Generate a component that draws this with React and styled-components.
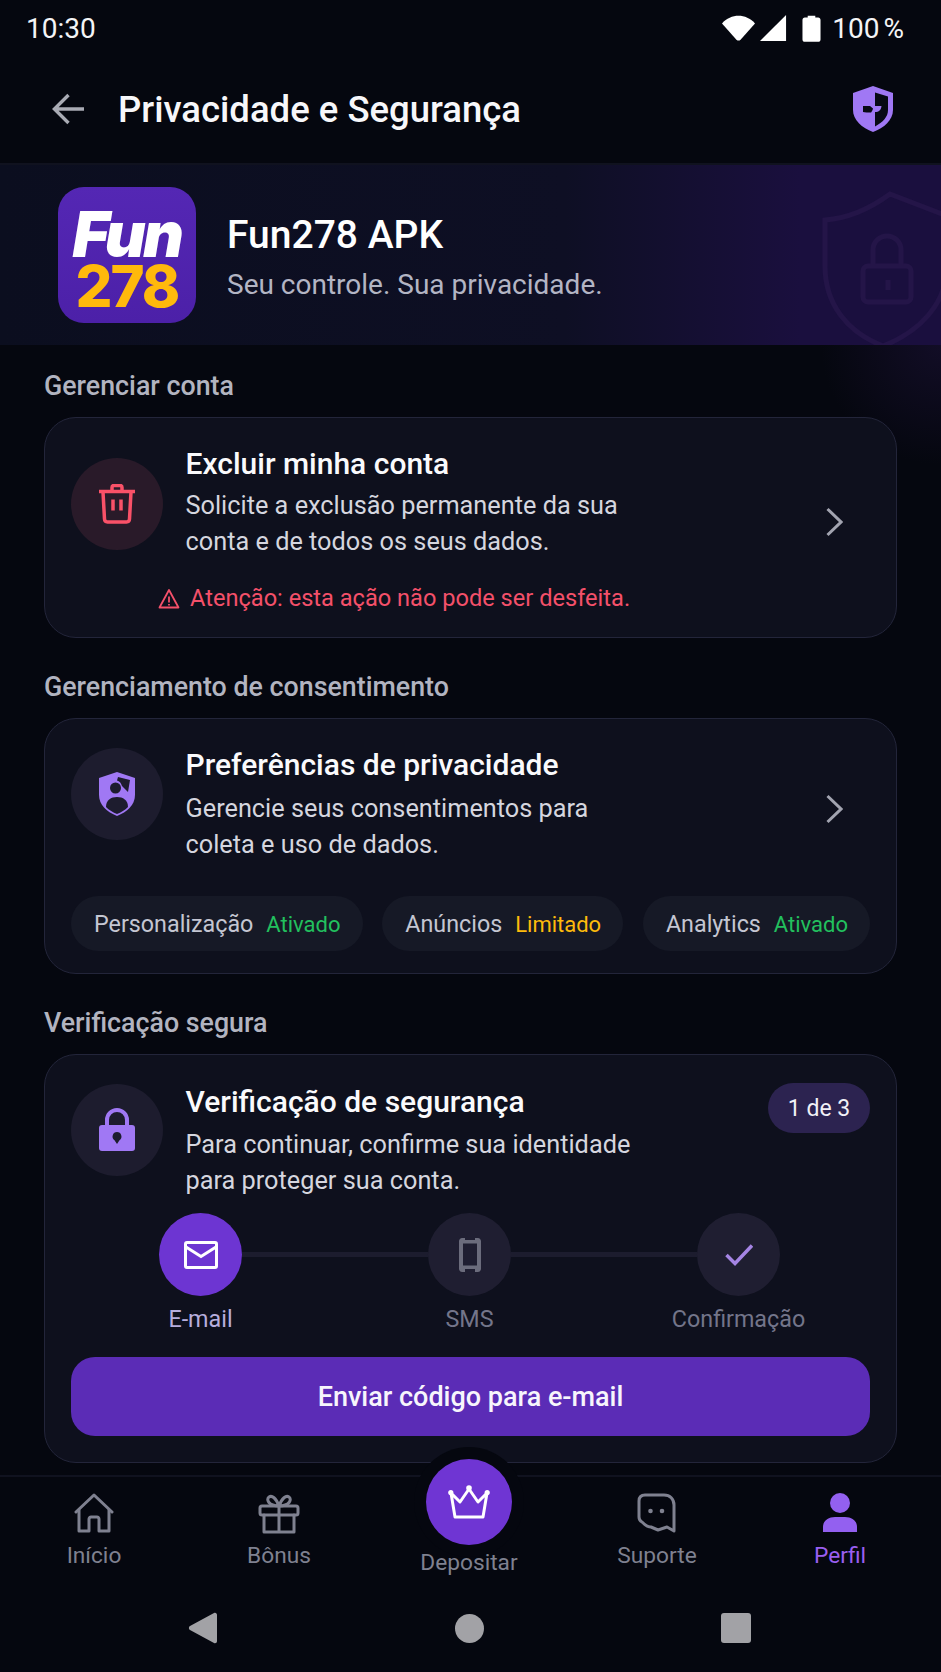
import React from 'react'
import styled, { createGlobalStyle } from 'styled-components'

const Global = createGlobalStyle`
  html, body { margin: 0; padding: 0; background: #05070f; }
  * { box-sizing: border-box; }
`

const Screen = styled.div`
  width: 941px;
  height: 1672px;
  display: flex;
  flex-direction: column;
  overflow: hidden;
  background: #05070f;
  font-family: Roboto, "Liberation Sans", sans-serif;
  color: #fff;
`

const StatusBar = styled.div`
  height: 55px;
  flex: none;
  display: flex;
  align-items: center;
  justify-content: space-between;
  padding: 1px 37px 0 26px;
  font-size: 28px;
  color: #f4f4f6;
`

const StatusIcons = styled.div`
  display: flex;
  align-items: center;
  gap: 5px;
`

const Percent = styled.span`
  margin-left: 6px;
  word-spacing: -3px;
`

const Header = styled.header`
  height: 110px;
  flex: none;
  display: flex;
  align-items: center;
  padding: 0 47px 0 52px;
  border-bottom: 2px solid #10121f;
`

const HeaderTitle = styled.h1`
  flex: 1;
  margin: 0 0 0 33px;
  font-size: 36.500px;
  font-weight: 500;
  color: #f7f7fa;
`

const Hero = styled.section`
  position: relative;
  height: 180px;
  flex: none;
  display: flex;
  align-items: center;
  gap: 31px;
  padding: 0 0 0 58px;
  overflow: hidden;
  background: linear-gradient(90deg, #0b0e1f 0%, #0e0f24 60%, #1a0f3e 85%, #1a0f3e 100%);
`

const Watermark = styled.svg`
  position: absolute;
  top: 25px;
  right: -12px;
`

const Logo = styled.div`
  width: 138px;
  height: 136px;
  flex: none;
  display: flex;
  flex-direction: column;
  align-items: center;
  justify-content: center;
  padding-top: 10px;
  border-radius: 26px;
  background: linear-gradient(180deg, #5427b4 0%, #4c20a8 100%);
  font-family: Inter, "Liberation Sans", sans-serif;
`

const LogoFun = styled.span`
  font-size: 63px;
  line-height: 52px;
  font-weight: 900;
  font-style: italic;
  letter-spacing: -2.500px;
  color: #fff;
`

const LogoNum = styled.span`
  font-size: 58px;
  line-height: 52px;
  font-weight: 800;
  letter-spacing: -2px;
  color: #ffb90c;
`

const HeroText = styled.div`
  margin-top: 4px;
`

const HeroTitle = styled.div`
  font-size: 39px;
  line-height: 44px;
  font-weight: 500;
  color: #fff;
`

const HeroSub = styled.div`
  margin-top: 11px;
  font-size: 28px;
  line-height: 34px;
  color: #b3b5c4;
`

const Main = styled.main`
  flex: 1;
  min-height: 0;
  padding: 26px 44px 0 44px;
  background: radial-gradient(circle at 100% 0%, #120d26 0%, rgba(18, 13, 38, 0) 120px), #05070f;
`

const SectionLabel = styled.h2`
  margin: 0 0 16px;
  font-size: 26.800px;
  line-height: 30px;
  font-weight: 500;
  color: #b2b4c0;
`

const Card = styled.section`
  position: relative;
  margin-bottom: 34px;
  padding: 28px 26px 22px;
  border: 1px solid #23253a;
  border-radius: 32px;
  background: #0e101d;
`

const Row = styled.div`
  display: flex;
  align-items: flex-start;
  gap: 22.500px;
`

const IconCircle = styled.div`
  width: 92px;
  height: 92px;
  flex: none;
  margin-top: ${p => p.$offset}px;
  display: flex;
  align-items: center;
  justify-content: center;
  border-radius: 50%;
  background: ${p => (p.$danger ? '#291a29' : '#1d1c2e')};
`

const Body = styled.div`
  flex: 1;
  margin-top: ${p => p.$nudge || 0}px;
`

const CardTitle = styled.h3`
  margin: 0 0 ${p => p.$gap || 6}px;
  font-size: 30px;
  line-height: 36px;
  font-weight: 500;
  color: #fafafc;
`

const CardText = styled.p`
  margin: 0;
  font-size: 25.300px;
  line-height: 36px;
  color: #d5d6df;
`

const Chevron = styled.svg`
  flex: none;
  margin: ${p => p.$top}px 27px 0 0;
`

const Warning = styled.div`
  display: flex;
  align-items: center;
  gap: 10px;
  margin: 22px 0 0 87px;
  font-size: 23.600px;
  line-height: 33px;
  color: #f4506a;
`

const Chips = styled.div`
  display: flex;
  justify-content: space-between;
  margin-top: 33px;
`

const Chip = styled.div`
  height: 55px;
  display: flex;
  align-items: center;
  gap: 13px;
  padding: 1px 22px 0 23px;
  border-radius: 28px;
  background: #161926;
  font-size: 23.300px;
  color: #c4c6d2;
`

const ChipState = styled.span`
  font-size: 22px;
  color: ${p => (p.$warn ? '#fdbb0c' : '#22c05e')};
`

const StepBadge = styled.span`
  position: absolute;
  top: 28px;
  right: 26px;
  width: 102px;
  height: 50px;
  display: flex;
  align-items: center;
  justify-content: center;
  border-radius: 25px;
  background: #2c2350;
  font-size: 23px;
  color: #f1f0f6;
`

const Stepper = styled.div`
  display: flex;
  margin: 14px 90px 0 88px;
`

const Step = styled.div`
  width: 83px;
  flex: none;
  display: flex;
  flex-direction: column;
  align-items: center;
`

const StepDot = styled.div`
  width: 83px;
  height: 83px;
  display: flex;
  align-items: center;
  justify-content: center;
  border-radius: 50%;
  background: ${p => (p.$active ? '#6d35d2' : '#1f1e31')};
`

const StepLabel = styled.span`
  margin-top: 7px;
  font-size: 23.300px;
  line-height: 32px;
  white-space: nowrap;
  color: ${p => (p.$active ? '#b7aedd' : '#73758a')};
`

const StepLine = styled.div`
  flex: 1;
  height: 5px;
  margin-top: 39px;
  background: #1c1c2e;
`

const SubmitButton = styled.button`
  display: block;
  width: 100%;
  height: 79px;
  margin: 22px 0 4px;
  border: none;
  border-radius: 24px;
  background: #5b2cb6;
  font-family: inherit;
  font-size: 27px;
  font-weight: 500;
  color: #f7f5fc;
`

const BottomNav = styled.nav`
  position: relative;
  z-index: 2;
  height: 115px;
  flex: none;
  display: grid;
  grid-template-columns: 188px 182px 198px 178px 188px;
  border-top: 2px solid #10121f;
  background: #05070f;
`

const NavItem = styled.div`
  display: flex;
  flex-direction: column;
  align-items: center;
  padding-top: 16px;
  font-size: 22.700px;
  line-height: 32px;
  color: ${p => (p.$active ? '#9a5ff0' : '#7f8190')};
`

const NavIcon = styled.svg`
  margin-bottom: 5px;
`

const DepositItem = styled(NavItem)`
  position: relative;
  padding-top: 0;
  margin-top: -18px;
  &::before {
    content: '';
    position: absolute;
    top: -12px;
    width: 110px;
    height: 110px;
    border-radius: 50%;
    background: #05070f;
  }
`

const DepositCircle = styled.div`
  position: relative;
  width: 86px;
  height: 86px;
  display: flex;
  align-items: center;
  justify-content: center;
  margin-bottom: 2px;
  border-radius: 50%;
  background: #6f35d3;
`

const DepositLabel = styled.span`
  position: relative;
`

const SystemBar = styled.div`
  height: 82px;
  flex: none;
  display: grid;
  grid-template-columns: 406px 133px 212px;
  justify-content: start;
  align-items: center;
  padding-bottom: 6px;
  background: #05070f;
`

const SysSlot = styled.div`
  display: flex;
  justify-content: flex-end;
`

const SysBack = styled.svg`
  margin-right: 188px;
`

const SysCircle = styled.div`
  width: 29px;
  height: 29px;
  margin-right: 55px;
  border-radius: 50%;
  background: #a2a2a6;
`

const SysSquare = styled.div`
  width: 30px;
  height: 30px;
  border-radius: 3px;
  background: #a2a2a6;
`

const BatteryIcon = styled.svg`
  margin-left: 10px;
`

const ShieldPerson = () => (
  <svg width="40" height="46" viewBox="0 0 40 46">
    <path d="M20 1 38 7v17c0 10-8 17-18 21C10 41 2 34 2 24V7z" fill="#a078f4" />
    <path d="M21 6 33 9l-2 12-6-6c-1-3-2.500-5-5-5.500z" fill="#1d1c2e" />
    <circle cx="18.500" cy="17" r="5.500" fill="#1d1c2e" />
    <path d="M9 36c0-7 5-10 11-10s11 3 11 10c-3 3-7 5.500-11 7-4-1.500-8-4-11-7z" fill="#1d1c2e" />
  </svg>
)

const Icons = {
  wifi: (
    <svg width="33" height="28" viewBox="0 0 36 28"><path d="M0 9C10-2 26-2 36 9L20 27c-1 1-3 1-4 0z" fill="#fff" /></svg>
  ),
  signal: (
    <svg width="27" height="28" viewBox="0 0 29 28"><path d="M28 0v28H0z" fill="#fff" /></svg>
  ),
  battery: (
    <BatteryIcon width="19" height="29" viewBox="0 0 20 29"><path d="M6 3V1h8v2h3c1.500 0 2.500 1 2.500 2.500V26c0 1.500-1 2.500-2.500 2.500H3C1.500 28.500.5 27.500.5 26V5.500C.5 4 1.500 3 3 3z" fill="#fff" /></BatteryIcon>
  ),
  back: (
    <svg width="33" height="32" viewBox="0 0 34 32" fill="none" stroke="#a9abb4" strokeWidth="3.500"><path d="M33 16H3M17 1.500 2.500 16 17 30.500" /></svg>
  ),
  headerShield: (
    <svg width="42" height="46" viewBox="0 0 42 46">
      <path d="M21 0 41 7v17c0 10-9 18-20 22C10 42 1 34 1 24V7z" fill="#a078f4" />
      <path d="M23 6.500 36 10.500V24c0 7-5 12-13 16.500V26c4 0 6-2 6.500-6H23z" fill="#080a14" />
      <path d="M11 20h7l3 2.500c-.5 2-1.500 3.500-2 4-3 0-6 0-8-.5z" fill="#080a14" />
    </svg>
  ),
  trash: (
    <svg width="38" height="40" viewBox="0 0 38 40" fill="none" stroke="#fa5168" strokeWidth="3.500" strokeLinejoin="round">
      <path d="M1 7.500h36" />
      <path d="M14 6V3.500C14 2 15 1.500 16 1.500h6c1 0 2 .5 2 2V6" />
      <path d="M5 8l1.500 27c.1 2 1 3 3 3h19c2 0 2.900-1 3-3L33 8" />
      <path d="M15 15.500v11M23 15.500v11" />
    </svg>
  ),
  alert: (
    <svg width="22" height="22" viewBox="0 0 22 22" fill="none" stroke="#f4506a" strokeWidth="1.800" strokeLinejoin="round">
      <path d="M11 2 20.500 19.500h-19z" />
      <path d="M11 8.500v6M11 16v1.500" />
    </svg>
  ),
  chevron: (top) => (
    <Chevron $top={top} width="18" height="30" viewBox="0 0 18 30" fill="none" stroke="#a2a4b0" strokeWidth="3"><path d="M2.500 2 16 15 2.500 28" /></Chevron>
  ),
  lock: (
    <svg width="38" height="44" viewBox="0 0 38 44">
      <path d="M9 20V12a10 10 0 0 1 20 0v8" fill="none" stroke="#a078f4" strokeWidth="4" />
      <rect x="1" y="17" width="36" height="26" rx="3" fill="#a078f4" />
      <path d="M19 24a4.500 4.500 0 0 1 2.500 8.200L19 36l-2.500-3.800A4.500 4.500 0 0 1 19 24z" fill="#1d1c2e" />
    </svg>
  ),
  mail: (
    <svg width="34" height="28" viewBox="0 0 34 28" fill="none" stroke="#fff" strokeWidth="3">
      <rect x="1.500" y="1.500" width="31" height="25" rx="1.500" />
      <path d="M2 6l15 9.500L32 6" />
    </svg>
  ),
  phone: (
    <svg width="22" height="34" viewBox="0 0 22 34">
      <path d="M3 0h3v2h10V0h3c1.500 0 3 1.500 3 3v28c0 1.500-1.500 3-3 3h-3v-3H6v3H3c-1.500 0-3-1.500-3-3V3C0 1.500 1.500 0 3 0z" fill="#6b6c7c" />
      <rect x="4" y="5.500" width="14" height="22" fill="#1f1e31" />
    </svg>
  ),
  check: (
    <svg width="28" height="22" viewBox="0 0 28 22" fill="none" stroke="#a585e4" strokeWidth="3.500"><path d="M1.500 11 10 19.500 27 1.500" /></svg>
  ),
  crown: (
    <svg width="42" height="36" viewBox="0 0 42 36" fill="none" stroke="#fff" strokeWidth="3" strokeLinejoin="round">
      <path d="M3 9l9 9 9-13 9 13 9-9-4 24H7z" />
      <circle cx="21" cy="4" r="2.800" fill="#fff" stroke="none" />
      <circle cx="2.800" cy="8.500" r="2.600" fill="#fff" stroke="none" />
      <circle cx="39.200" cy="8.500" r="2.600" fill="#fff" stroke="none" />
    </svg>
  ),
}

const navStroke = { fill: 'none', stroke: '#7f8190', strokeWidth: 3, strokeLinejoin: 'round', strokeLinecap: 'round' }

const Tab = ({ label, active, children }) => (
  <NavItem $active={active}>
    <NavIcon width="44" height="42" viewBox="0 0 44 42">{children}</NavIcon>
    {label}
  </NavItem>
)

const App = () => (
  <>
    <Global />
    <Screen>
      <StatusBar>
        <span>10:30</span>
        <StatusIcons>
          {Icons.wifi}
          {Icons.signal}
          {Icons.battery}
          <Percent>100 %</Percent>
        </StatusIcons>
      </StatusBar>

      <Header>
        {Icons.back}
        <HeaderTitle>Privacidade e Segurança</HeaderTitle>
        {Icons.headerShield}
      </Header>

      <Hero>
        <Watermark width="140" height="160" viewBox="0 0 140 160" fill="none" stroke="#241548" strokeWidth="5">
          <path d="M77 4 134 26v50c0 38-28 66-64 80C34 142 12 114 12 76V30c26-2 46-12 65-26z" />
          <rect x="50" y="76" width="48" height="36" rx="5" />
          <path d="M60 76V60a14 14 0 0 1 28 0v16" />
          <path d="M75 90v10" />
        </Watermark>
        <Logo>
          <LogoFun>Fun</LogoFun>
          <LogoNum>278</LogoNum>
        </Logo>
        <HeroText>
          <HeroTitle>Fun278 APK</HeroTitle>
          <HeroSub>Seu controle. Sua privacidade.</HeroSub>
        </HeroText>
      </Hero>

      <Main>
        <SectionLabel>Gerenciar conta</SectionLabel>
        <Card>
          <Row>
            <IconCircle $danger $offset={12}>{Icons.trash}</IconCircle>
            <Body>
              <CardTitle>Excluir minha conta</CardTitle>
              <CardText>Solicite a exclusão permanente da sua<br />conta e de todos os seus dados.</CardText>
            </Body>
            {Icons.chevron(61)}
          </Row>
          <Warning>{Icons.alert}Atenção: esta ação não pode ser desfeita.</Warning>
        </Card>

        <SectionLabel>Gerenciamento de consentimento</SectionLabel>
        <Card>
          <Row>
            <IconCircle $offset={1}><ShieldPerson /></IconCircle>
            <Body>
              <CardTitle $gap={8}>Preferências de privacidade</CardTitle>
              <CardText>Gerencie seus consentimentos para<br />coleta e uso de dados.</CardText>
            </Body>
            {Icons.chevron(47)}
          </Row>
          <Chips>
            <Chip>Personalização <ChipState>Ativado</ChipState></Chip>
            <Chip>Anúncios <ChipState $warn>Limitado</ChipState></Chip>
            <Chip>Analytics <ChipState>Ativado</ChipState></Chip>
          </Chips>
        </Card>

        <SectionLabel>Verificação segura</SectionLabel>
        <Card>
          <StepBadge>1 de 3</StepBadge>
          <Row>
            <IconCircle $offset={1}>{Icons.lock}</IconCircle>
            <Body $nudge={1}>
              <CardTitle $gap={7}>Verificação de segurança</CardTitle>
              <CardText>Para continuar, confirme sua identidade<br />para proteger sua conta.</CardText>
            </Body>
          </Row>
          <Stepper>
            <Step>
              <StepDot $active>{Icons.mail}</StepDot>
              <StepLabel $active>E-mail</StepLabel>
            </Step>
            <StepLine />
            <Step>
              <StepDot>{Icons.phone}</StepDot>
              <StepLabel>SMS</StepLabel>
            </Step>
            <StepLine />
            <Step>
              <StepDot>{Icons.check}</StepDot>
              <StepLabel>Confirmação</StepLabel>
            </Step>
          </Stepper>
          <SubmitButton>Enviar código para e-mail</SubmitButton>
        </Card>
      </Main>

      <BottomNav>
        <Tab label="Início">
          <g {...navStroke}>
            <path d="M4 19 22 2l18 17" />
            <path d="M7 17v21h10V26c0-1 1-2 2-2h6c1 0 2 1 2 2v12h10V17" />
          </g>
        </Tab>
        <Tab label="Bônus">
          <g {...navStroke}>
            <rect x="3" y="13" width="38" height="9" rx="2" />
            <path d="M7 22v17h30V22M22 13v26" />
            <path d="M22 13c-3-8-7-11-10-9-3 2-1 9 10 9zM22 13c3-8 7-11 10-9 3 2 1 9-10 9z" />
          </g>
        </Tab>
        <DepositItem>
          <DepositCircle>{Icons.crown}</DepositCircle>
          <DepositLabel>Depositar</DepositLabel>
        </DepositItem>
        <Tab label="Suporte">
          <g {...navStroke}>
            <path d="M10 2h19c6 0 10 4 10 10v26l-7-4-9 3-7-3c-4 0-6-2-9-5-2-1-3-3-3-5V8c0-4 2-6 6-6z" />
          </g>
          <circle cx="15.500" cy="18" r="2.300" fill="#7f8190" />
          <circle cx="27" cy="18" r="2.300" fill="#7f8190" />
        </Tab>
        <Tab label="Perfil" active>
          <circle cx="22" cy="10" r="10" fill="#9360f0" />
          <path d="M5 39V34c0-7 6-10 12-10h10c6 0 12 3 12 10v5z" fill="#9360f0" />
        </Tab>
      </BottomNav>

      <SystemBar>
        <SysSlot>
          <SysBack width="30" height="32" viewBox="0 0 30 32">
            <path d="M2 14 26 1c1.500-.8 3 .2 3 2v26c0 1.800-1.500 2.800-3 2L2 18c-1.500-.8-1.500-3.200 0-4z" fill="#a2a2a6" />
          </SysBack>
        </SysSlot>
        <SysSlot><SysCircle /></SysSlot>
        <SysSlot><SysSquare /></SysSlot>
      </SystemBar>
    </Screen>
  </>
)

export default App
